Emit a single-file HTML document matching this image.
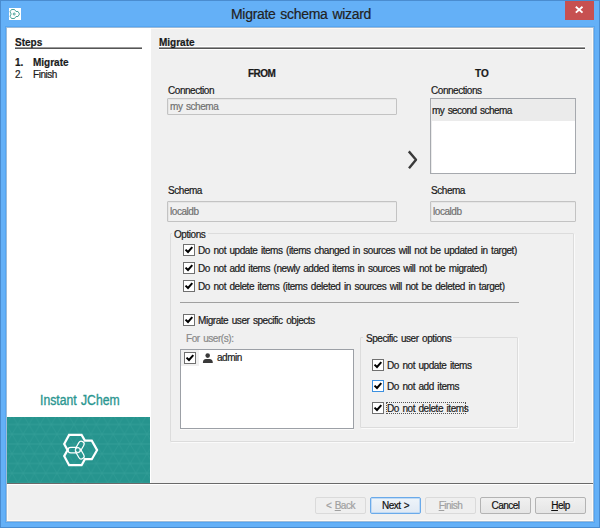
<!DOCTYPE html>
<html><head><meta charset="utf-8">
<style>
*{margin:0;padding:0;box-sizing:border-box}
html,body{width:600px;height:528px;overflow:hidden}
body{background:#64b0f7;position:relative;font-family:"Liberation Sans",sans-serif;font-size:10px;letter-spacing:-0.45px;word-spacing:1.2px;color:#1a1a1a}
.a{position:absolute;z-index:2;white-space:nowrap;line-height:12px;-webkit-text-stroke:0.2px currentColor}
.b{font-weight:bold;letter-spacing:0;word-spacing:0}
.g{color:#707070}
.ln{position:absolute;height:1px}
.cb{position:absolute;width:12px;height:12px;border:1px solid #707070;background:#fff}
.cb svg{position:absolute;left:0;top:0}
.fld{position:absolute;border:1px solid #c3c3c3;border-radius:1px;background:#f0f0f0;box-shadow:inset 1px 1px 0 #e6e6e6}
.btn{position:absolute;top:497px;width:51px;height:17px;border:1px solid #b3b3b3;border-radius:2px;background:linear-gradient(#f0f0f0,#e5e5e5);text-align:center;line-height:15px;color:#111;letter-spacing:-0.5px;word-spacing:1px;-webkit-text-stroke:0.2px currentColor}
u{text-underline-offset:1px;text-decoration-thickness:1px}
</style></head><body>
<!-- window frame -->
<div style="position:absolute;left:0;top:0;width:600px;height:528px;border:1px solid #4a8cd0"></div>
<div style="position:absolute;left:5px;top:26px;width:590px;height:497px;border:1px solid #55a6f2"></div>
<div style="position:absolute;left:6px;top:27px;width:588px;height:495px;border:1px solid #9cbad8"></div>
<!-- title icon -->
<div style="position:absolute;left:9px;top:8px;width:12px;height:12px;background:#fff"></div>
<svg style="position:absolute;left:9px;top:8px" width="12" height="12" viewBox="0 0 12 12"><g fill="none" stroke="#3a9a8e" stroke-width="0.9"><path d="M2.5 1.5 L5.5 1.5 L7 3.5 L9 3.5 L10.5 6 L9 8.5 L7 8.5 L5.5 10.5 L2.5 10.5 L1 8.2 L2.2 6 L1 3.8 Z"/><circle cx="5.2" cy="6" r="1"/></g></svg>
<div class="a" style="left:231px;top:5px;font-size:14px;letter-spacing:-0.3px;line-height:18px;color:#222">Migrate schema wizard</div>
<!-- close -->
<div style="position:absolute;left:565px;top:1px;width:29px;height:19px;background:#c75050"></div>
<svg style="position:absolute;left:565px;top:1px" width="29" height="19" viewBox="0 0 29 19"><path d="M10.8 5.8 L17.5 11.6 M17.5 5.8 L10.8 11.6" stroke="#fff" stroke-width="1.9"/></svg>

<!-- content -->
<div style="position:absolute;left:7px;top:28px;width:586px;height:493px;background:#f0f0f0;border:1px solid #fffaf5"></div>
<!-- left white panel -->
<div style="position:absolute;left:7px;top:28px;width:144px;height:455px;background:#fff"></div>
<div class="a b" style="left:15px;top:37px">Steps</div>
<div class="ln" style="left:15px;top:47px;width:127px;background:#9a9a9a"></div><div class="ln" style="left:15px;top:48px;width:127px;background:#555"></div>
<div class="a b" style="left:15px;top:57px">1.</div>
<div class="a b" style="left:33px;top:57px">Migrate</div>
<div class="a" style="left:15px;top:69px">2.</div>
<div class="a" style="left:33px;top:69px">Finish</div>
<div class="a" style="left:40px;top:392px;font-size:14px;line-height:16px;color:#2a9690;letter-spacing:0;-webkit-text-stroke:0.35px #2a9690;transform:scaleX(0.87);transform-origin:0 0">Instant JChem</div>
<!-- teal logo -->
<div style="position:absolute;left:7px;top:417px;width:143px;height:66px;background:#26948e;overflow:hidden">
<svg width="143" height="66" style="position:absolute;left:0;top:0">
<defs><pattern id="tri" width="11.25" height="19.5" patternUnits="userSpaceOnUse" patternTransform="translate(10.6 7.5)">
<path d="M-1 0 H12.25 M-1 9.75 H12.25 M-1 19.5 H12.25" stroke="#3fa8a2" stroke-width="0.9" fill="none"/><path d="M0 0 L11.25 19.5 M11.25 0 L0 19.5 M-5.625 9.75 L0 19.5 M16.875 9.75 L11.25 19.5 M-5.625 9.75 L0 0 M16.875 9.75 L11.25 0" stroke="#3fa6a0" stroke-width="0.6" fill="none"/>
</pattern></defs>
<rect width="143" height="66" fill="url(#tri)" opacity="0.55"/>
<path d="M62.1 17.9 L74.6 17.9 L77.9 23.6 L84.8 23.6 L90.1 33.1 L84.8 42.2 L77.9 42.2 L74.6 48.2 L62.1 48.2 L57.2 39.1 L60.6 33.1 L57.2 27 Z" fill="none" stroke="#fff" stroke-width="2.2" stroke-linejoin="miter"/>
<g fill="none" stroke="#fff" stroke-width="1.2">
<rect x="61" y="30.3" width="11.5" height="5.6" rx="2.8" />
<rect x="61" y="30.3" width="11.5" height="5.6" rx="2.8" transform="rotate(120 70.8 33.1)"/>
<rect x="61" y="30.3" width="11.5" height="5.6" rx="2.8" transform="rotate(240 70.8 33.1)"/>
</g>
<circle cx="70.8" cy="33.1" r="2.3" fill="#26948e" stroke="#fff" stroke-width="1"/>
</svg>
</div>

<!-- right panel -->
<div class="a b" style="left:159px;top:37px">Migrate</div>
<div class="ln" style="left:159px;top:46px;width:426px;background:#fff"></div><div class="ln" style="left:159px;top:47px;width:426px;background:#9a9a9a"></div><div class="ln" style="left:159px;top:48px;width:426px;background:#555"></div><div class="ln" style="left:159px;top:49px;width:426px;background:#fff"></div>
<div class="a b" style="left:248px;top:68px;letter-spacing:-0.5px">FROM</div>
<div class="a b" style="left:475px;top:68px">TO</div>

<div class="a" style="left:168px;top:85px">Connection</div>
<div class="fld" style="left:167px;top:98px;width:230px;height:17px"></div>
<div class="a g" style="left:170px;top:101px">my schema</div>

<div class="a" style="left:431px;top:85px">Connections</div>
<div style="position:absolute;left:430px;top:98px;width:146px;height:76px;border:1px solid #a6a9ae;background:#fff;box-shadow:inset 1px 1px 0 #ececec"></div>
<div style="position:absolute;left:432px;top:100px;width:143px;height:21px;background:#ebebeb"></div>
<div class="a" style="left:432px;top:105px;letter-spacing:-0.55px">my second schema</div>

<svg style="position:absolute;left:400px;top:145px" width="24" height="30" viewBox="0 0 24 30"><path d="M8.8 6.4 L16 14.7 L9 23.2" fill="none" stroke="#3a3a3a" stroke-width="2.4" stroke-linejoin="round"/></svg>

<div class="a" style="left:168px;top:185px">Schema</div>
<div class="fld" style="left:167px;top:201px;width:230px;height:21px"></div>
<div class="a g" style="left:170px;top:206px">localdb</div>
<div class="a" style="left:431px;top:185px">Schema</div>
<div class="fld" style="left:430px;top:201px;width:146px;height:21px"></div>
<div class="a g" style="left:433px;top:206px">localdb</div>

<!-- options group -->
<div style="position:absolute;left:170px;top:233px;width:404px;height:209px;border:1px solid #dcdcdc;border-radius:1px;box-shadow:1px 1px 0 #fafafa"></div>
<div style="position:absolute;left:172px;top:229px;width:36px;height:10px;background:#f0f0f0"></div>
<div class="a" style="left:174px;top:229px">Options</div>

<div class="cb" style="left:183px;top:244px"><svg width="10" height="10"><path d="M1.5 4.6 L4 7 L8.3 2.2" fill="none" stroke="#000" stroke-width="2"/></svg></div>
<div class="a" style="left:198px;top:245px">Do not update items (items changed in sources will not be updated in target)</div>
<div class="cb" style="left:183px;top:262px"><svg width="10" height="10"><path d="M1.5 4.6 L4 7 L8.3 2.2" fill="none" stroke="#000" stroke-width="2"/></svg></div>
<div class="a" style="left:198px;top:263px">Do not add items (newly added items in sources will not be migrated)</div>
<div class="cb" style="left:183px;top:280px"><svg width="10" height="10"><path d="M1.5 4.6 L4 7 L8.3 2.2" fill="none" stroke="#000" stroke-width="2"/></svg></div>
<div class="a" style="left:198px;top:281px">Do not delete items (items deleted in sources will not be deleted in target)</div>

<div class="ln" style="left:180px;top:302px;width:339px;background:#a0a0a0"></div>

<div class="cb" style="left:183px;top:314px"><svg width="10" height="10"><path d="M1.5 4.6 L4 7 L8.3 2.2" fill="none" stroke="#000" stroke-width="2"/></svg></div>
<div class="a" style="left:198px;top:315px">Migrate user specific objects</div>
<div class="a" style="left:186px;top:333px;color:#8a8a8a">For user(s):</div>

<div style="position:absolute;left:180px;top:349px;width:174px;height:80px;border:1px solid #9ca0a6;background:#fff;box-shadow:0 1px 0 #fafafa"></div>
<div style="position:absolute;left:181px;top:350px;width:18px;height:16px;background:#f0f0f0"></div>
<div class="cb" style="left:184px;top:352px"><svg width="10" height="10"><path d="M1.5 4.6 L4 7 L8.3 2.2" fill="none" stroke="#000" stroke-width="2"/></svg></div>
<svg style="position:absolute;left:201px;top:352px" width="13" height="12" viewBox="0 0 13 12"><circle cx="6.7" cy="3.6" r="2.3" fill="#3a3a3a"/><path d="M1.9 10.9 C1.9 8.2 3 7.1 5 7.1 H8.6 C10.6 7.1 11.8 8.2 11.8 10.9 Z" fill="#3a3a3a"/></svg>
<div class="a" style="left:217px;top:352px">admin</div>

<!-- specific user options -->
<div style="position:absolute;left:360px;top:337px;width:158px;height:91px;border:1px solid #dcdcdc;border-radius:1px;box-shadow:1px 1px 0 #fafafa"></div>
<div style="position:absolute;left:363px;top:333px;width:90px;height:10px;background:#f0f0f0"></div>
<div class="a" style="left:366px;top:333px">Specific user options</div>
<div class="cb" style="left:372px;top:359px"><svg width="10" height="10"><path d="M1.5 4.6 L4 7 L8.3 2.2" fill="none" stroke="#000" stroke-width="2"/></svg></div>
<div class="a" style="left:387px;top:360px">Do not update items</div>
<div class="cb" style="left:372px;top:380px;border-color:#3c90e0"><svg width="10" height="10"><path d="M1.5 4.6 L4 7 L8.3 2.2" fill="none" stroke="#000" stroke-width="2"/></svg></div>
<div class="a" style="left:387px;top:381px">Do not add items</div>
<div class="cb" style="left:372px;top:402px"><svg width="10" height="10"><path d="M1.5 4.6 L4 7 L8.3 2.2" fill="none" stroke="#000" stroke-width="2"/></svg></div>
<div style="position:absolute;left:386px;top:402px;width:80px;height:12px;border:1px dotted #555"></div>
<div class="a" style="left:387px;top:403px">Do not delete items</div>

<!-- bottom bar -->
<div class="ln" style="left:7px;top:483px;width:586px;background:#696969"></div>
<div class="ln" style="left:7px;top:484px;width:586px;background:#fff"></div>
<div class="btn" style="left:315px;border-color:#dadada;background:#efefef;color:#a0a0a0">&lt; <u>B</u>ack</div>
<div class="btn" style="left:370px;border-color:#6aaaea;box-shadow:inset 0 0 0 1px #c0daf4;background:linear-gradient(#eef4fa,#e0e9f3)">Next &gt;</div>
<div class="btn" style="left:425px;border-color:#dadada;background:#efefef;color:#a0a0a0"><u>F</u>inish</div>
<div class="btn" style="left:480px">Cancel</div>
<div class="btn" style="left:535px"><u>H</u>elp</div>
</body></html>
